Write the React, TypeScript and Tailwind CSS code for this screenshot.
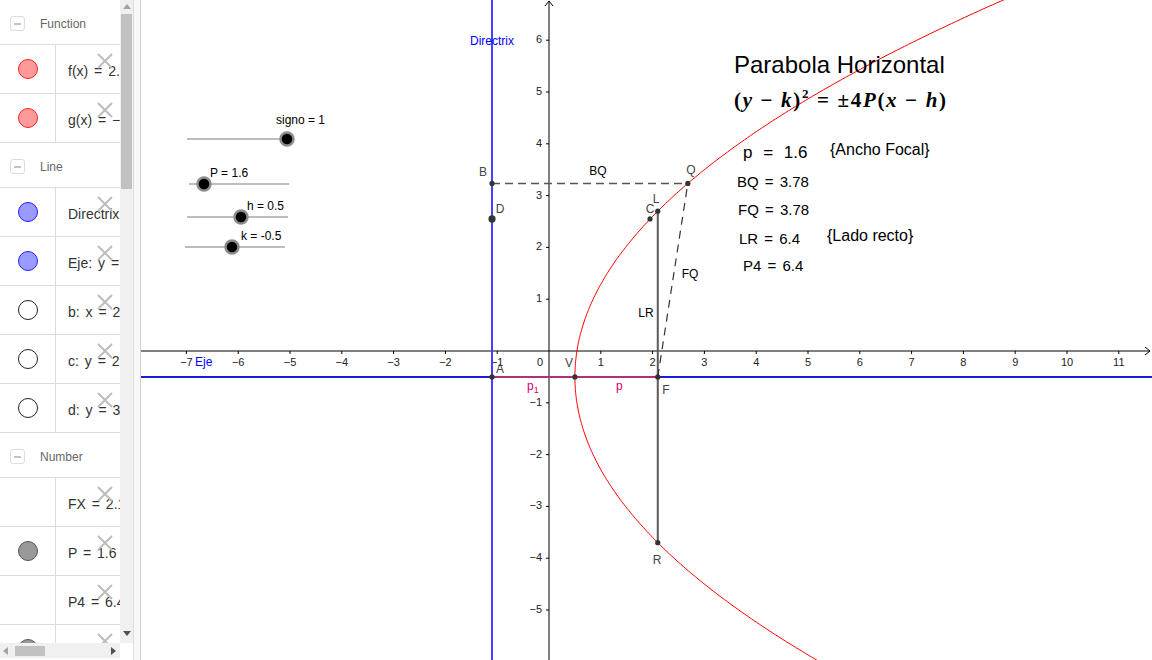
import React from "react";

// world -> screen mapping for the graphics view (page coordinates)
const OX = 549;
const OY = 351;
const U = 51.8;
const sx = (x: number) => OX + U * x;
const sy = (y: number) => OY - U * y;

const FONT = '"Liberation Sans", Arial, sans-serif';

type Marker = "red" | "blue" | "hollow" | "gray" | null;
type Row = { header: string } | { marker: Marker; text: string };

const ROWS: Row[] = [
  { header: "Function" },
  { marker: "red", text: "f(x) = 2.53 √(x − 0.5) − 0.5" },
  { marker: "red", text: "g(x) = −2.53 √(x − 0.5) − 0.5" },
  { header: "Line" },
  { marker: "blue", text: "Directrix: x = −1.1" },
  { marker: "blue", text: "Eje: y = −0.5" },
  { marker: "hollow", text: "b: x = 2.1" },
  { marker: "hollow", text: "c: y = 2.55" },
  { marker: "hollow", text: "d: y = 3.24" },
  { header: "Number" },
  { marker: null, text: "FX = 2.1" },
  { marker: "gray", text: "P = 1.6" },
  { marker: null, text: "P4 = 6.4" },
  { marker: "gray", text: "h = 0.5" },
];

const markerClass: Record<string, string> = {
  red: "bg-[#ff9a9a] border-[#ff2020]",
  blue: "bg-[#9a9aff] border-[#2020ff]",
  hollow: "bg-white border-[#222]",
  gray: "bg-[#999] border-[#555]",
};

function DeleteX() {
  return (
    <svg className="absolute left-[97px] top-[8px]" width="16" height="16" viewBox="0 0 16 16">
      <path d="M1 1 L15 15 M15 1 L1 15" stroke="#bdbdbd" strokeWidth="2" fill="none" />
    </svg>
  );
}

function AlgebraRow({ row }: { row: Row }) {
  if ("header" in row) {
    return (
      <div className="flex h-[45px] shrink-0 items-center border-b border-[#dcdcdc] pt-[3px]">
        <div className="ml-[10px] flex h-[15px] w-[15px] items-center justify-center rounded-[3px] border border-[#dcdcdc]">
          <div className="h-[2px] w-[7px] bg-[#c4c4c4]" />
        </div>
        <span className="ml-[15px] text-[12px] text-[#666]">{row.header}</span>
      </div>
    );
  }
  return (
    <div className="relative flex h-[49px] shrink-0 border-b border-[#dcdcdc]">
      <div className="flex w-[56px] shrink-0 items-center justify-center border-r border-[#dcdcdc]">
        {row.marker && (
          <div className={`h-[20px] w-[20px] rounded-full border ${markerClass[row.marker]}`} />
        )}
      </div>
      <div className="flex items-center whitespace-nowrap pl-[12px] pt-[5px] text-[14px] text-[#333] [word-spacing:2px]">
        {row.text}
      </div>
      <DeleteX />
    </div>
  );
}

function Tri({ dir, color }: { dir: "up" | "down" | "left" | "right"; color: string }) {
  const d = {
    up: "M0 6 L4 1 L8 6 Z",
    down: "M0 2 L4 7 L8 2 Z",
    left: "M6 0 L1 4 L6 8 Z",
    right: "M2 0 L7 4 L2 8 Z",
  }[dir];
  return (
    <svg width="8" height="8" viewBox="0 0 8 8">
      <path d={d} fill={color} />
    </svg>
  );
}

function Slider({ x1, x2, y, knob, label, lx, ly }: { x1: number; x2: number; y: number; knob: number; label: string; lx: number; ly: number }) {
  return (
    <g>
      <line x1={x1} y1={y} x2={x2} y2={y} stroke="#7a7a7a" strokeWidth="1" />
      <circle cx={knob} cy={y} r="6.5" fill="#000" stroke="#8c8c8c" strokeWidth="2.5" />
      <text x={lx} y={ly} fontSize="12" fill="#000" dominantBaseline="middle">{label}</text>
    </g>
  );
}

function Graphics() {
  const pts: string[] = [];
  for (let t = -6.8; t <= 7.4; t += 0.04) {
    const x = 0.5 + ((t + 0.5) * (t + 0.5)) / 6.4;
    pts.push(`${sx(x).toFixed(1)},${sy(t).toFixed(1)}`);
  }
  const A = [sx(-1.1), sy(-0.5)];
  const V = [sx(0.5), sy(-0.5)];
  const F = [sx(2.1), sy(-0.5)];
  const L = [sx(2.1), sy(2.7)];
  const R = [sx(2.1), sy(-3.7)];
  const B = [sx(-1.1), sy(3.235)];
  const Q = [sx(2.68), sy(3.235)];
  const C = [sx(1.95), sy(2.55)];
  const D = [sx(-1.1), sy(2.55)];

  const xs = [-7, -6, -5, -4, -3, -2, -1, 1, 2, 3, 4, 5, 6, 7, 8, 9, 10, 11];
  const ys = [6, 5, 4, 3, 2, 1, -1, -2, -3, -4, -5];
  const num = (n: number) => (n < 0 ? `−${-n}` : `${n}`);

  return (
    <svg width="1011" height="660" viewBox="141 0 1011 660" className="block" style={{ fontFamily: FONT }}>
      <rect x="141" y="0" width="1011" height="660" fill="#fff" />

      {/* axes */}
      <line x1="141" y1={OY} x2="1150" y2={OY} stroke="#000" strokeWidth="1" />
      <path d={`M1145 ${OY - 4} L1150 ${OY} L1145 ${OY + 4}`} stroke="#000" fill="none" />
      <line x1={OX} y1="1" x2={OX} y2="660" stroke="#000" strokeWidth="1" />
      <path d={`M${OX - 4} 6 L${OX} 1 L${OX + 4} 6`} stroke="#000" fill="none" />
      {xs.map((i) => (
        <g key={`x${i}`}>
          <line x1={sx(i)} y1={OY} x2={sx(i)} y2={OY + 3} stroke="#000" />
          <text x={sx(i)} y={363} fontSize="11" fill="#222" textAnchor="middle" dominantBaseline="middle">{num(i)}</text>
        </g>
      ))}
      {ys.map((j) => (
        <g key={`y${j}`}>
          <line x1={OX - 3} y1={sy(j)} x2={OX} y2={sy(j)} stroke="#000" />
          <text x={542} y={sy(j)} fontSize="11" fill="#222" textAnchor="end" dominantBaseline="middle">{num(j)}</text>
        </g>
      ))}
      <text x={543} y={363} fontSize="11" fill="#222" textAnchor="end" dominantBaseline="middle">0</text>

      {/* directrix and axis of symmetry */}
      <line x1={sx(-1.1)} y1="0" x2={sx(-1.1)} y2="660" stroke="#4040ff" strokeWidth="2" />
      <line x1="141" y1={sy(-0.5)} x2="1152" y2={sy(-0.5)} stroke="#1c1cdc" strokeWidth="2" />
      <text x={492} y={42} fontSize="12" fill="#0000ff" textAnchor="middle" dominantBaseline="middle">Directrix</text>
      <text x={195} y={363} fontSize="12" fill="#0000ff" dominantBaseline="middle">Eje</text>

      {/* p1 and p segments */}
      <line x1={A[0]} y1={A[1]} x2={F[0]} y2={F[1]} stroke="#b0307e" strokeWidth="2" />

      {/* parabola */}
      <polyline points={pts.join(" ")} fill="none" stroke="#ff0000" strokeWidth="1" />

      {/* latus rectum and dashed segments */}
      <line x1={L[0]} y1={L[1]} x2={R[0]} y2={R[1]} stroke="#5a5a5a" strokeWidth="2" />
      <line x1={B[0]} y1={B[1]} x2={Q[0]} y2={Q[1]} stroke="#555" strokeWidth="1.5" strokeDasharray="8 5" />
      <line x1={F[0]} y1={F[1]} x2={Q[0]} y2={Q[1]} stroke="#333" strokeWidth="1.2" strokeDasharray="8 6" />

      {/* points */}
      {[A, V, F, L, R, B, Q, C].map((p, i) => (
        <circle key={i} cx={p[0]} cy={p[1]} r="2.6" fill="#333" />
      ))}
      <circle cx={D[0]} cy={D[1]} r="3.6" fill="#333" />

      {/* labels */}
      <g fontSize="12" fill="#444" dominantBaseline="middle" textAnchor="middle">
        <text x={483} y={173}>B</text>
        <text x={691} y={171}>Q</text>
        <text x={500} y={210}>D</text>
        <text x={650} y={210}>C</text>
        <text x={656} y={200}>L</text>
        <text x={569} y={364}>V</text>
        <text x={500} y={370}>A</text>
        <text x={666} y={391}>F</text>
        <text x={657} y={561}>R</text>
      </g>
      <g fontSize="12" fill="#000" dominantBaseline="middle" textAnchor="middle">
        <text x={598} y={172}>BQ</text>
        <text x={690} y={275}>FQ</text>
        <text x={646} y={314}>LR</text>
      </g>
      <g fontSize="12" fill="#e0006a" dominantBaseline="middle">
        <text x={527} y={387}>p<tspan fontSize="9" dy="4">1</tspan></text>
        <text x={616} y={387}>p</text>
      </g>

      {/* sliders */}
      <g fill="#000">
        <Slider x1={187} x2={287} y={139} knob={287} label="signo = 1" lx={276} ly={121} />
        <Slider x1={189} x2={289} y={184} knob={204} label="P = 1.6" lx={210} ly={174} />
        <Slider x1={187} x2={288} y={217} knob={241} label="h = 0.5" lx={247} ly={207} />
        <Slider x1={185} x2={285} y={247} knob={232} label="k = -0.5" lx={241} ly={237} />
      </g>

      {/* text block */}
      <text x={734} y={73} fontSize="24" fill="#000">Parabola Horizontal</text>
      <text x={734} y={107} fontSize="21" fontWeight="bold" fill="#000" style={{ fontFamily: '"Liberation Serif", "Times New Roman", serif' }} textLength="212" lengthAdjust="spacing">
        <tspan>(</tspan>
        <tspan fontStyle="italic">y</tspan>
        <tspan> − </tspan>
        <tspan fontStyle="italic">k</tspan>
        <tspan>)</tspan>
        <tspan fontSize="13" dy="-9">2</tspan>
        <tspan dy="9"> = ±4</tspan>
        <tspan fontStyle="italic">P</tspan>
        <tspan>(</tspan>
        <tspan fontStyle="italic">x</tspan>
        <tspan> − </tspan>
        <tspan fontStyle="italic">h</tspan>
        <tspan>)</tspan>
      </text>
      <text x={743} y={158} fontSize="17" fill="#000" wordSpacing="6">p = 1.6</text>
      <text x={830} y={155} fontSize="16" fill="#000">{"{Ancho Focal}"}</text>
      <g fontSize="15" fill="#000" wordSpacing="2">
        <text x={737} y={187}>BQ = 3.78</text>
        <text x={738} y={215}>FQ = 3.78</text>
        <text x={739} y={244}>LR = 6.4</text>
        <text x={743} y={271}>P4 = 6.4</text>
      </g>
      <text x={827} y={241} fontSize="16" fill="#000">{"{Lado recto}"}</text>
    </svg>
  );
}

export default function App() {
  return (
    <div className="flex h-[660px] w-[1152px] overflow-hidden bg-white" style={{ fontFamily: FONT }}>
      {/* algebra view */}
      <div className="flex w-[120px] shrink-0 flex-col">
        <div className="flex h-[643px] flex-col overflow-hidden">
          {ROWS.map((r, i) => (
            <AlgebraRow key={i} row={r} />
          ))}
        </div>
        <div className="flex h-[15px] items-center bg-[#f0f0f0]">
          <div className="ml-[1px] flex w-[10px] justify-center">
            <Tri dir="left" color="#a3a3a3" />
          </div>
          <div className="ml-[4px] h-[10px] w-[30px] bg-[#c1c1c1]" />
          <div className="flex-1" />
          <div className="mr-[2px] flex w-[10px] justify-center">
            <Tri dir="right" color="#505050" />
          </div>
        </div>
      </div>

      {/* vertical scrollbar */}
      <div className="flex w-[13px] shrink-0 flex-col">
        <div className="flex h-[643px] flex-col items-center bg-[#f0f0f0]">
          <div className="flex h-[14px] items-center">
            <Tri dir="up" color="#a3a3a3" />
          </div>
          <div className="h-[175px] w-[11px] bg-[#c1c1c1]" />
          <div className="flex-1" />
          <div className="flex h-[14px] items-center pb-[6px]">
            <Tri dir="down" color="#505050" />
          </div>
        </div>
        <div className="flex-1 bg-white" />
      </div>

      {/* splitter */}
      <div className="w-[8px] shrink-0 border-l border-r border-l-[#dedede] border-r-[#d2d2d2] bg-[#f8f8f8]" />

      <Graphics />
    </div>
  );
}
